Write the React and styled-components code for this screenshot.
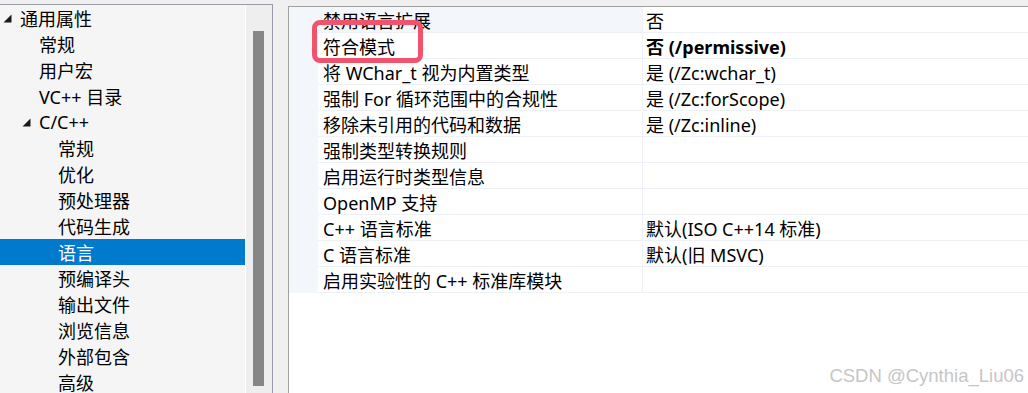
import React from 'react';
import styled, { createGlobalStyle } from 'styled-components';

const GlobalStyle = createGlobalStyle`
  html, body {
    margin: 0;
    padding: 0;
    background: #f0f0f0;
    overflow: hidden;
  }
  body {
    font-family: 'Noto Sans', 'Noto Sans CJK SC', sans-serif;
    font-size: 18px;
    color: #000;
  }
`;

const Page = styled.div`
  position: relative;
  display: flex;
  align-items: flex-start;
  height: 393px;
  padding-top: 4px;
  box-sizing: border-box;
`;

const TreePanel = styled.div`
  display: flex;
  width: 273px;
  height: 389px;
  box-sizing: border-box;
  background: #f5f5f5;
  border-top: 1px solid #9c9ca8;
  border-right: 1px solid #9a9ab0;
`;

const TreeList = styled.ul`
  list-style: none;
  margin: 0;
  padding: 0;
  width: 245px;
  border-right: 1px solid #ffffff;
`;

const TreeItem = styled.li`
  display: flex;
  align-items: center;
  height: 26px;
  padding-left: ${({ level }) => level * 19 + 3}px;
  background: ${({ selected }) => (selected ? '#007acc' : 'transparent')};
  color: ${({ selected }) => (selected ? '#ffffff' : '#000000')};
  white-space: nowrap;
`;

const Toggle = styled.span`
  display: inline-flex;
  width: 17px;
  height: 26px;
  align-items: center;
`;

const ScrollTrack = styled.div`
  flex: 1;
  background: #eeeeee;
  padding: 26px 0 0 7px;
`;

const ScrollThumb = styled.div`
  width: 11px;
  height: 355px;
  background: #868686;
`;

const Grid = styled.div`
  position: relative;
  flex: 1;
  margin-left: 15px;
  margin-top: 2px;
  height: 387px;
  background: #ffffff;
  border-top: 1px solid #a0a0a0;
  border-left: 1px solid #a0a0a0;
`;

const Row = styled.div`
  display: flex;
  height: 26px;
  white-space: nowrap;
`;

const Gutter = styled.div`
  width: 29px;
  background: #f3f6fb;
`;

const NameCell = styled.div`
  width: 319px;
  padding-left: 5px;
  display: flex;
  align-items: center;
  border-right: 1px solid #eef1f7;
  border-bottom: 1px solid #eef1f7;
  background: ${({ hot }) => (hot ? '#f3f6fb' : '#ffffff')};
`;

const ValueCell = styled.div`
  flex: 1;
  padding-left: 3px;
  display: flex;
  align-items: center;
  border-bottom: 1px solid #eef1f7;
  font-weight: ${({ bold }) => (bold ? 700 : 400)};
`;

const Highlight = styled.div`
  position: absolute;
  left: 23px;
  top: 13px;
  width: 111px;
  height: 43px;
  box-sizing: border-box;
  border: 5px solid #f2536c;
  border-radius: 8px;
`;

const Watermark = styled.div`
  position: absolute;
  right: 4px;
  bottom: 6px;
  font-family: 'Liberation Sans', Arial, sans-serif;
  font-size: 18.5px;
  color: #c6c6c6;
  text-shadow: 0 0 1px rgba(255, 255, 255, 0.8);
`;

const tree = [
  { label: '通用属性', level: 0, open: true },
  { label: '常规', level: 1 },
  { label: '用户宏', level: 1 },
  { label: 'VC++ 目录', level: 1 },
  { label: 'C/C++', level: 1, open: true },
  { label: '常规', level: 2 },
  { label: '优化', level: 2 },
  { label: '预处理器', level: 2 },
  { label: '代码生成', level: 2 },
  { label: '语言', level: 2, selected: true },
  { label: '预编译头', level: 2 },
  { label: '输出文件', level: 2 },
  { label: '浏览信息', level: 2 },
  { label: '外部包含', level: 2 },
  { label: '高级', level: 2 },
];

const props = [
  { name: '禁用语言扩展', value: '否', hot: true },
  { name: '符合模式', value: '否 (/permissive)', bold: true },
  { name: '将 WChar_t 视为内置类型', value: '是 (/Zc:wchar_t)' },
  { name: '强制 For 循环范围中的合规性', value: '是 (/Zc:forScope)' },
  { name: '移除未引用的代码和数据', value: '是 (/Zc:inline)' },
  { name: '强制类型转换规则', value: '' },
  { name: '启用运行时类型信息', value: '' },
  { name: 'OpenMP 支持', value: '' },
  { name: 'C++ 语言标准', value: '默认(ISO C++14 标准)' },
  { name: 'C 语言标准', value: '默认(旧 MSVC)' },
  { name: '启用实验性的 C++ 标准库模块', value: '' },
];

const Arrow = () => (
  <svg width="9" height="9" viewBox="0 0 9 9">
    <polygon points="8.5,0.5 8.5,8.5 0.5,8.5" fill="#1a1a1a" />
  </svg>
);

const App = () => (
  <>
    <GlobalStyle />
    <Page>
      <TreePanel>
        <TreeList>
          {tree.map((item, i) => (
            <TreeItem key={i} level={item.level} selected={item.selected}>
              <Toggle>{item.open && <Arrow />}</Toggle>
              {item.label}
            </TreeItem>
          ))}
        </TreeList>
        <ScrollTrack>
          <ScrollThumb />
        </ScrollTrack>
      </TreePanel>
      <Grid>
        {props.map((p) => (
          <Row key={p.name}>
            <Gutter />
            <NameCell hot={p.hot}>{p.name}</NameCell>
            <ValueCell bold={p.bold}>{p.value}</ValueCell>
          </Row>
        ))}
        <Highlight />
      </Grid>
      <Watermark>CSDN @Cynthia_Liu06</Watermark>
    </Page>
  </>
);

export default App;
